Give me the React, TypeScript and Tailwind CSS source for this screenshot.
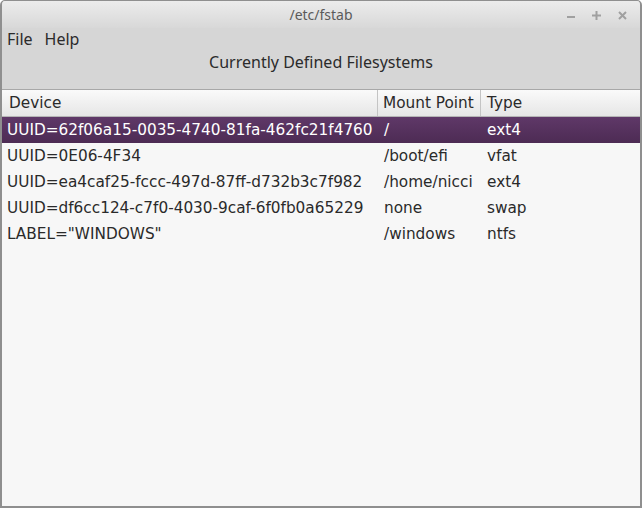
import React from "react";

type Row = { device: string; mount: string; type: string };

const rows: Row[] = [
  { device: "UUID=62f06a15-0035-4740-81fa-462fc21f4760", mount: "/", type: "ext4" },
  { device: "UUID=0E06-4F34", mount: "/boot/efi", type: "vfat" },
  { device: "UUID=ea4caf25-fccc-497d-87ff-d732b3c7f982", mount: "/home/nicci", type: "ext4" },
  { device: "UUID=df6cc124-c7f0-4030-9caf-6f0fb0a65229", mount: "none", type: "swap" },
  { device: 'LABEL="WINDOWS"', mount: "/windows", type: "ntfs" },
];

const uiFont = { fontFamily: '"Noto Sans", "Open Sans", sans-serif' };
const listFont = { fontFamily: '"DejaVu Sans", sans-serif' };

const App = () => {
  return (
    <div className="flex h-[508px] w-[642px] flex-col overflow-hidden rounded-t-[5px] border-x-2 border-b-2 border-t border-[#8f8f8f] bg-[#d6d6d6]">
      {/* title bar */}
      <div
        className="relative flex h-[27px] shrink-0 items-center justify-center bg-gradient-to-b from-[#ececec] to-[#d8d8d8] text-[14px] text-[#5a5a5a]"
        style={uiFont}
      >
        /etc/fstab
        <div className="absolute right-[13px] top-[10px] flex items-center gap-[17px]">
          <span className="mt-[3px] block h-[2px] w-[8px] bg-[#a0a0a0]" />
          <svg width="9" height="9" viewBox="0 0 9 9">
            <path d="M4.5 0v9M0 4.5h9" stroke="#a0a0a0" strokeWidth="2" />
          </svg>
          <svg width="9" height="9" viewBox="0 0 9 9">
            <path d="M1 1l7 7M8 1l-7 7" stroke="#a0a0a0" strokeWidth="2" />
          </svg>
        </div>
      </div>

      {/* menu */}
      <div className="flex h-[22px] shrink-0 items-center gap-[12px] px-[5px] text-[16px] text-[#2b2b2b]" style={uiFont}>
        <span>File</span>
        <span>Help</span>
      </div>

      <div className="flex h-[39px] shrink-0 items-start justify-center text-[16px] text-[#2b2b2b]" style={uiFont}>
        Currently Defined Filesystems
      </div>

      {/* tree view */}
      <div className="flex flex-1 flex-col border-t border-[#a8a8a8] bg-[#f7f7f7]" style={listFont}>
        <div className="flex h-[27px] shrink-0 border-b border-[#b5b5b5] bg-gradient-to-b from-[#fafafa] to-[#e6e6e6] text-[15.3px] text-[#2a2a2a]">
          <div className="flex w-[376px] items-center border-r border-[#c4c4c4] px-[7px]">Device</div>
          <div className="flex w-[103px] items-center border-r border-[#c4c4c4] px-[5px]">Mount Point</div>
          <div className="flex flex-1 items-center px-[6px]">Type</div>
        </div>
        {rows.map((r, i) => (
          <div
            key={r.device}
            className={
              i === 0
                ? "flex h-[26px] items-center bg-gradient-to-b from-[#5f3868] to-[#4d2b54] text-[15.3px] text-white"
                : "flex h-[26px] items-center text-[15.3px] text-[#2a2a2a]"
            }
          >
            <div className="w-[376px] whitespace-nowrap px-[5px]">{r.device}</div>
            <div className="w-[103px] whitespace-nowrap px-[6px]">{r.mount}</div>
            <div className="flex-1 whitespace-nowrap px-[6px]">{r.type}</div>
          </div>
        ))}
      </div>
    </div>
  );
};

export default App;
